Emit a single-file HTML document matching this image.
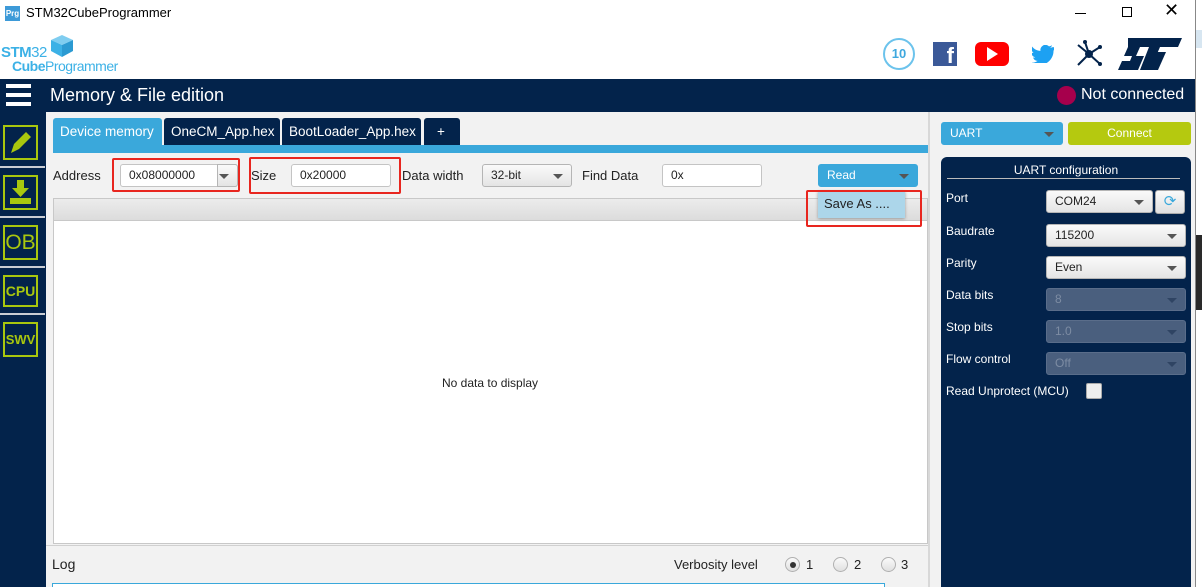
<!DOCTYPE html>
<html><head><meta charset="utf-8"><style>
*{box-sizing:border-box;margin:0;padding:0}
html,body{width:1202px;height:587px;overflow:hidden}
body{background:#fff;font-family:"Liberation Sans","Noto Sans CJK SC",sans-serif;position:relative;font-size:13px;color:#222}
.a{position:absolute}
.navy{background:#03234b}
.combo{position:absolute;border:1px solid #b5b5b5;border-radius:3px;background:linear-gradient(#fafafa,#e4e4e4);font-size:12px;padding-left:8px;line-height:21px;color:#222}
.combo:after{content:"";position:absolute;right:8px;top:9px;border-left:5px solid transparent;border-right:5px solid transparent;border-top:5px solid #555}
.inp{position:absolute;border:1px solid #c4c4c4;border-radius:3px;background:#fff;font-size:12px;padding-left:8px;line-height:21px}
.red{position:absolute;border:2px solid #e8261f;border-radius:2px}
.tab{position:absolute;top:118px;height:27px;color:#fff;font-size:13.5px;line-height:27px;padding-left:7px;border-radius:3px 3px 0 0;background:#03234b;white-space:nowrap;overflow:hidden}
.side{position:absolute;left:3px;width:35px;border:2px solid #a9c70e;color:#a9c70e;text-align:center;font-weight:bold}
.sep{position:absolute;left:0;width:45px;height:2px;background:#c9cdd3}
.lbl{position:absolute;left:946px;color:#fff;font-size:12px}
.dis{background:#4a5f7e;border-color:#5a6d8a;color:#7d8ca3}
.dis:after{border-top-color:#2f4463}
.radio{position:absolute;top:557px;width:15px;height:15px;border-radius:50%;border:1px solid #b0b0b0;background:linear-gradient(#fafafa,#e0e0e0)}
</style></head><body>
<div class="a" style="left:5px;top:6px;width:15px;height:15px;background:#3d9ad8;color:#fff;font-size:8px;font-weight:bold;line-height:15px;text-align:center">Prg</div>
<div class="a" style="left:26px;top:5px;font-size:13px;color:#000">STM32CubeProgrammer</div>
<div class="a" style="left:1075px;top:13px;width:11px;height:1px;background:#000"></div>
<div class="a" style="left:1122px;top:7px;width:10px;height:10px;border:1px solid #000"></div>
<div class="a" style="left:1164px;top:0px;font-size:18px;color:#000">✕</div>
<div class="a" style="left:1px;top:44px;font-size:15px;font-weight:bold;color:#3cb1e6;letter-spacing:-0.5px">STM<span style="font-weight:normal">32</span></div>
<div class="a" style="left:12px;top:58px;font-size:14px;font-weight:bold;color:#3cb1e6;letter-spacing:-0.5px">Cube<span style="font-weight:normal">Programmer</span></div>
<svg class="a" style="left:49px;top:33px" width="26" height="26"><polygon points="2,7 13,2 24,7 13,12" fill="#7fcdf0"/><polygon points="2,7 13,12 13,24 2,18" fill="#3cb1e6"/><polygon points="24,7 13,12 13,24 24,18" fill="#2b9ad2"/></svg>
<div class="a" style="left:883px;top:38px;width:32px;height:32px;border-radius:50%;border:2px solid #6cc3ec;color:#3ea8de;font-weight:bold;font-size:13px;text-align:center;line-height:28px">10</div>
<div class="a" style="left:933px;top:42px;width:24px;height:24px;background:#3b5998;color:#fff;font-weight:bold;font-size:22px;text-align:right;padding-right:3px;line-height:28px;overflow:hidden">f</div>
<div class="a" style="left:975px;top:42px;width:34px;height:24px;background:#f00;border-radius:6px"></div>
<svg class="a" style="left:987px;top:47px" width="12" height="14"><polygon points="0,0 11,7 0,14" fill="#fff"/></svg>
<svg class="a" style="left:1032px;top:45px" width="22" height="18"><path d="M21 2c-1 .5-2 .7-3 .8 1-.6 1.8-1.5 2-2.6-1 .6-2 1-3 1.2a5 5 0 0 0-8.5 4.5C5 5.8 2 4 0 1.5c-1.5 2.5 0 5 1.5 6.5-.8 0-1.6-.3-2.2-.6 0 2.5 1.7 4.5 4 5-.7.2-1.5.2-2.2.1.6 2 2.5 3.4 4.6 3.4A10 10 0 0 1 0 17.8 14 14 0 0 0 21.5 5.5c1-.7 1.7-1.5 2.3-2.4z" fill="#1da1f2"/></svg>
<svg class="a" style="left:1075px;top:40px" width="28" height="28"><g stroke="#03234b" stroke-width="2"><line x1="14" y1="14" x2="3" y2="5"/><line x1="14" y1="14" x2="10" y2="2"/><line x1="14" y1="14" x2="25" y2="7"/><line x1="14" y1="14" x2="3" y2="25"/><line x1="14" y1="14" x2="25" y2="24"/></g><circle cx="14" cy="14" r="4" fill="#03234b"/><circle cx="25" cy="7" r="2" fill="#03234b"/><circle cx="25" cy="24" r="2" fill="#03234b"/><circle cx="10" cy="2" r="2" fill="#03234b"/></svg>
<svg class="a" style="left:1118px;top:38px" width="64" height="32"><path d="M10 0H64L60 9H42L32 32H22L31 9H22L18 18H26L20 32H0L4 23H12L14 18H6L10 9z" fill="#03234b"/><path d="M38 14H48L40 32H30z" fill="#03234b"/></svg>
<div class="a" style="left:1195px;top:0;width:7px;height:587px;background:#fff;border-left:1px solid #888"></div>
<div class="a" style="left:1196px;top:30px;width:6px;height:18px;background:#d7e6f1"></div>
<div class="a" style="left:1196px;top:235px;width:6px;height:75px;background:#2a2a2a"></div>
<div class="a navy" style="left:0;top:79px;width:1195px;height:33px"></div>
<div class="a" style="left:6px;top:84px;width:25px;height:4px;background:#fff;box-shadow:0 9px 0 #fff,0 18px 0 #fff"></div>
<div class="a" style="left:50px;top:85px;font-size:18px;color:#fff">Memory &amp; File edition</div>
<div class="a" style="left:1057px;top:86px;width:19px;height:19px;border-radius:50%;background:#a6004c"></div>
<div class="a" style="left:1081px;top:86px;font-size:16px;color:#fff">Not connected</div>
<div class="a navy" style="left:0;top:112px;width:46px;height:475px"></div>
<div class="side" style="top:125px;height:35px"><svg width="31" height="31"><path d="M6 26l3-9 12-12 5 5-12 12z" fill="#a9c70e"/></svg></div>
<div class="sep" style="top:166px"></div>
<div class="side" style="top:175px;height:35px"><svg width="31" height="31"><path d="M12 3h7v8h5l-8.5 9L7 11h5z" fill="#a9c70e"/><rect x="5" y="21" width="21" height="6" fill="#a9c70e"/></svg></div>
<div class="sep" style="top:216px"></div>
<div class="side" style="top:225px;height:35px;font-weight:normal;font-size:21px;line-height:31px">OB</div>
<div class="sep" style="top:266px"></div>
<div class="side" style="top:275px;height:32px;font-size:14px;line-height:28px">CPU</div>
<div class="sep" style="top:313px"></div>
<div class="side" style="top:322px;height:35px;font-size:13px;line-height:31px">SWV</div>
<div class="a" style="left:46px;top:112px;width:884px;height:475px;background:#f2f2f2"></div>
<div class="tab" style="left:53px;width:109px;background:#3aa8db">Device memory</div>
<div class="tab" style="left:164px;width:116px">OneCM_App.hex</div>
<div class="tab" style="left:282px;width:139px">BootLoader_App.hex</div>
<div class="tab" style="left:424px;width:36px;padding-left:13px">+</div>
<div class="a" style="left:53px;top:145px;width:875px;height:8px;background:#3aa8db"></div>
<div class="a" style="left:53px;top:168px;font-size:13px">Address</div>
<div class="inp" style="left:120px;top:164px;width:118px;height:23px">0x08000000</div>
<div class="combo" style="left:217px;top:164px;width:21px;height:23px;border-radius:0 3px 3px 0;padding:0"></div>
<div class="red" style="left:112px;top:158px;width:128px;height:34px"></div>
<div class="a" style="left:251px;top:168px">Size</div>
<div class="inp" style="left:291px;top:164px;width:100px;height:23px">0x20000</div>
<div class="red" style="left:249px;top:157px;width:152px;height:37px"></div>
<div class="a" style="left:402px;top:168px">Data width</div>
<div class="combo" style="left:482px;top:164px;width:90px;height:23px">32-bit</div>
<div class="a" style="left:582px;top:168px">Find Data</div>
<div class="inp" style="left:662px;top:164px;width:100px;height:23px">0x</div>
<div class="combo" style="left:818px;top:164px;width:100px;height:23px;background:#3aa8db;border-color:#3aa8db;color:#fff">Read</div>
<div class="a" style="left:53px;top:198px;width:875px;height:346px;background:#fff;border:1px solid #c8c8c8"></div>
<div class="a" style="left:54px;top:199px;width:873px;height:22px;background:linear-gradient(#ececec,#dcdcdc);border-bottom:1px solid #c8c8c8"></div>
<div class="a" style="left:818px;top:191px;width:87px;height:27px;background:#acd6ea;box-shadow:0 1px 3px #999;font-size:13px;padding:5px 6px">Save As ....</div>
<div class="red" style="left:806px;top:190px;width:116px;height:37px"></div>
<div class="a" style="left:442px;top:376px;font-size:12px">No data to display</div>
<div class="a" style="left:46px;top:545px;width:884px;height:1px;background:#d0d0d0"></div>
<div class="a" style="left:52px;top:556px;font-size:14px">Log</div>
<div class="a" style="left:674px;top:557px;font-size:13px">Verbosity level</div>
<div class="radio" style="left:785px"></div><div class="a" style="left:790px;top:562px;width:6px;height:6px;border-radius:50%;background:#333"></div>
<div class="a" style="left:806px;top:557px">1</div>
<div class="radio" style="left:833px"></div><div class="a" style="left:854px;top:557px">2</div>
<div class="radio" style="left:881px"></div><div class="a" style="left:901px;top:557px">3</div>
<div class="a" style="left:52px;top:583px;width:833px;height:4px;background:#fff;border:1px solid #3aa8db;border-bottom:none"></div>
<div class="a" style="left:928px;top:112px;width:2px;height:475px;background:#d8d8d8"></div>
<div class="a" style="left:930px;top:112px;width:265px;height:475px;background:#f2f2f2"></div>
<div class="combo" style="left:941px;top:122px;width:122px;height:23px;background:#3aa8db;border-color:#3aa8db;color:#fff">UART</div>
<div class="a" style="left:1068px;top:122px;width:123px;height:23px;background:#b5c90f;border-radius:3px;color:#fff;text-align:center;line-height:23px;font-size:12px">Connect</div>
<div class="a navy" style="left:941px;top:157px;width:250px;height:430px;border-radius:6px 6px 0 0"></div>
<div class="a" style="left:941px;top:163px;width:250px;text-align:center;color:#fff;font-size:12px">UART configuration</div>
<div class="a" style="left:947px;top:178px;width:233px;height:1px;background:#bbb"></div>
<div class="lbl" style="top:191px">Port</div>
<div class="combo" style="left:1046px;top:190px;width:107px;height:23px">COM24</div>
<div class="a" style="left:1155px;top:190px;width:30px;height:24px;border:1px solid #aaa;border-radius:3px;background:linear-gradient(#fafafa,#e0e0e0);color:#3aa8db;text-align:center;line-height:22px;font-size:15px">⟳</div>
<div class="lbl" style="top:224px">Baudrate</div>
<div class="combo" style="left:1046px;top:224px;width:140px;height:23px">115200</div>
<div class="lbl" style="top:256px">Parity</div>
<div class="combo" style="left:1046px;top:256px;width:140px;height:23px">Even</div>
<div class="lbl" style="top:288px">Data bits</div>
<div class="combo dis" style="left:1046px;top:288px;width:140px;height:23px">8</div>
<div class="lbl" style="top:320px">Stop bits</div>
<div class="combo dis" style="left:1046px;top:320px;width:140px;height:23px">1.0</div>
<div class="lbl" style="top:352px">Flow control</div>
<div class="combo dis" style="left:1046px;top:352px;width:140px;height:23px">Off</div>
<div class="lbl" style="top:384px">Read Unprotect (MCU)</div>
<div class="a" style="left:1086px;top:383px;width:16px;height:16px;background:#eee;border:1px solid #aaa;border-radius:2px"></div>
</body></html>
